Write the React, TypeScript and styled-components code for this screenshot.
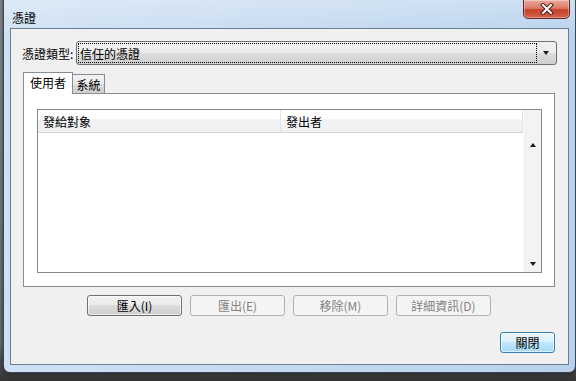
import styled, { createGlobalStyle } from "styled-components";

const GlobalStyle = createGlobalStyle`
  html, body {
    margin: 0;
    padding: 0;
  }
  body {
    width: 576px;
    height: 381px;
    overflow: hidden;
    background: #4a4a4a;
    font-family: "Noto Sans CJK TC", "Noto Sans", sans-serif;
    font-size: 12px;
    color: #000;
  }
`;

const Desktop = styled.div`
  position: relative;
  width: 576px;
  height: 381px;
  overflow: hidden;
  background: linear-gradient(to bottom, #8a8f96 0%, #6a6e74 90%, #333 100%);
`;

const Window = styled.div`
  position: absolute;
  left: 3px;
  top: -8px;
  width: 573px;
  height: 381px;
  box-sizing: border-box;
  border: 1px solid #3b4757;
  border-radius: 7px;
  padding: 0 6px 7px;
  display: flex;
  flex-direction: column;
  background:
    linear-gradient(to bottom, rgba(255, 255, 255, 0.35) 0%, rgba(255, 255, 255, 0) 12%),
    linear-gradient(to right, #cfe1f4 0%, #c6dbf1 40%, #b8d2ed 100%);
  box-shadow: 0 0 5px rgba(0, 0, 0, 0.6);
`;

const TitleBar = styled.div`
  height: 35px;
  display: flex;
  align-items: flex-start;
`;

const Title = styled.span`
  margin: 18px 0 0 2px;
  line-height: 14px;
  color: #000;
`;

const CloseButton = styled.div`
  margin: 6px -1px 0 auto;
  width: 47px;
  height: 20px;
  box-sizing: border-box;
  border: 1px solid #5e2a22;
  border-radius: 0 0 5px 5px;
  background: linear-gradient(to bottom, #e9a99b 0%, #dc7c68 45%, #c5402a 55%, #d2634b 100%);
  box-shadow: inset 0 0 0 1px rgba(255, 255, 255, 0.35);
  display: flex;
  align-items: center;
  justify-content: center;
`;

const ClientFrame = styled.div`
  flex: 1;
  border: 1px solid #6d7d92;
  background: #f0f0f0;
  padding: 12px 13px 11px 12px;
  display: flex;
  flex-direction: column;
`;

const ComboRow = styled.div`
  height: 24px;
  display: flex;
  align-items: center;
`;

const Label = styled.span`
  width: 54px;
  margin-left: -1px;
  white-space: nowrap;
`;

const Combo = styled.div`
  flex: 1;
  height: 24px;
  margin-right: -2px;
  box-sizing: border-box;
  border: 1px solid #707070;
  border-radius: 3px;
  padding: 1px;
  display: flex;
  background: linear-gradient(to bottom, #f2f2f2 0%, #ebebeb 50%, #dddddd 50%, #cfcfcf 100%);
`;

const FocusBox = styled.div`
  flex: 1;
  border: 1px dotted #000;
  padding-left: 1px;
  display: flex;
  align-items: center;
`;

const ArrowArea = styled.div`
  width: 18px;
  display: flex;
  align-items: center;
  justify-content: center;
`;

const Triangle = styled.span<{ $up?: boolean; $size?: number }>`
  width: 0;
  height: 0;
  border-left: ${(p) => p.$size ?? 3}px solid transparent;
  border-right: ${(p) => p.$size ?? 3}px solid transparent;
  ${(p) =>
    p.$up
      ? `border-bottom: ${(p.$size ?? 3) + 1}px solid #1a1a1a;`
      : `border-top: ${(p.$size ?? 3) + 1}px solid #1a1a1a;`}
`;

const TabStrip = styled.div`
  margin-top: 7px;
  height: 21px;
  display: flex;
  align-items: flex-end;
  position: relative;
  z-index: 1;
`;

const Tab = styled.div<{ $active?: boolean }>`
  box-sizing: border-box;
  border: 1px solid #898c95;
  border-bottom: none;
  display: flex;
  align-items: center;
  justify-content: center;
  ${(p) =>
    p.$active
      ? `
    width: 50px;
    height: 22px;
    margin-bottom: -1px;
    padding-bottom: 3px;
    background: #fff;
    position: relative;
    z-index: 2;
  `
      : `
    width: 33px;
    height: 19px;
    margin-left: -1px;
    padding-top: 1px;
    background: linear-gradient(to bottom, #f2f2f2 0%, #ebebeb 50%, #dddddd 50%, #cfcfcf 100%);
  `}
`;

const Panel = styled.div`
  height: 194px;
  box-sizing: border-box;
  border: 1px solid #898c95;
  background: #fff;
  padding: 15px 12px 13px 13px;
  display: flex;
`;

const ListBox = styled.div`
  flex: 1;
  border: 1px solid #828790;
  display: flex;
  background: #fff;
`;

const ListMain = styled.div`
  flex: 1;
  display: flex;
  flex-direction: column;
`;

const Header = styled.div`
  height: 23px;
  box-sizing: border-box;
  display: flex;
  border-bottom: 1px solid #d5d5d5;
  background: linear-gradient(to bottom, #ffffff 0%, #ffffff 40%, #f3f4f6 40%, #eff0f2 100%);
`;

const HeaderCell = styled.div<{ $width?: number }>`
  ${(p) => (p.$width ? `width: ${p.$width}px;` : "flex: 1;")}
  box-sizing: border-box;
  padding-left: 5px;
  display: flex;
  align-items: center;
  border-right: 1px solid #e3e4e6;
`;

const Scrollbar = styled.div`
  width: 17px;
  display: flex;
  flex-direction: column;
  background: #f3f3f3;
  border-left: 1px solid #fafafa;
`;

const ScrollCorner = styled.div`
  height: 26px;
`;

const ScrollArrow = styled.div`
  height: 17px;
  display: flex;
  align-items: center;
  justify-content: center;
`;

const ScrollTrack = styled.div`
  flex: 1;
`;

const ButtonRow = styled.div<{ $align?: string; $top: number }>`
  margin-top: ${(p) => p.$top}px;
  display: flex;
  justify-content: ${(p) => p.$align ?? "center"};
  gap: 8px;
`;

const Button = styled.div<{ $variant?: "normal" | "disabled" | "default"; $width?: number }>`
  width: ${(p) => p.$width ?? 95}px;
  height: 21px;
  box-sizing: border-box;
  border-radius: 3px;
  display: flex;
  align-items: center;
  justify-content: center;
  white-space: nowrap;
  ${(p) =>
    p.$variant === "disabled"
      ? `
    border: 1px solid #adb2b5;
    background: #f4f4f4;
    color: #838383;
  `
      : p.$variant === "default"
      ? `
    border: 1px solid #3c7fb1;
    background: linear-gradient(to bottom, #eaf6fd 0%, #d9f0fc 50%, #bee6fd 50%, #a7d9f5 100%);
    box-shadow: inset 0 0 0 1px rgba(255, 255, 255, 0.6);
  `
      : `
    border: 1px solid #707070;
    background: linear-gradient(to bottom, #f2f2f2 0%, #ebebeb 50%, #dddddd 50%, #cfcfcf 100%);
    box-shadow: inset 0 0 0 1px rgba(255, 255, 255, 0.6);
  `}
`;

const CloseGlyph = () => (
  <svg width="14" height="12" viewBox="0 0 14 12">
    <path d="M3 2 L11 10 M11 2 L3 10" stroke="#4a1d16" strokeWidth="4" strokeLinecap="square" />
    <path d="M3 2 L11 10 M11 2 L3 10" stroke="#fff" strokeWidth="2" strokeLinecap="square" />
  </svg>
);

export default function App() {
  return (
    <>
      <GlobalStyle />
      <Desktop>
        <Window>
          <TitleBar>
            <Title>憑證</Title>
            <CloseButton>
              <CloseGlyph />
            </CloseButton>
          </TitleBar>
          <ClientFrame>
            <ComboRow>
              <Label>憑證類型:</Label>
              <Combo>
                <FocusBox>信任的憑證</FocusBox>
                <ArrowArea>
                  <Triangle />
                </ArrowArea>
              </Combo>
            </ComboRow>
            <TabStrip>
              <Tab $active>使用者</Tab>
              <Tab>系統</Tab>
            </TabStrip>
            <Panel>
              <ListBox>
                <ListMain>
                  <Header>
                    <HeaderCell $width={243}>發給對象</HeaderCell>
                    <HeaderCell>發出者</HeaderCell>
                  </Header>
                </ListMain>
                <Scrollbar>
                  <ScrollCorner />
                  <ScrollArrow>
                    <Triangle $up $size={3} />
                  </ScrollArrow>
                  <ScrollTrack />
                  <ScrollArrow>
                    <Triangle $size={3} />
                  </ScrollArrow>
                </Scrollbar>
              </ListBox>
            </Panel>
            <ButtonRow $top={8}>
              <Button>匯入(I)</Button>
              <Button $variant="disabled">匯出(E)</Button>
              <Button $variant="disabled">移除(M)</Button>
              <Button $variant="disabled">詳細資訊(D)</Button>
            </ButtonRow>
            <ButtonRow $top={16} $align="flex-end">
              <Button $variant="default" $width={55}>
                關閉
              </Button>
            </ButtonRow>
          </ClientFrame>
        </Window>
      </Desktop>
    </>
  );
}
